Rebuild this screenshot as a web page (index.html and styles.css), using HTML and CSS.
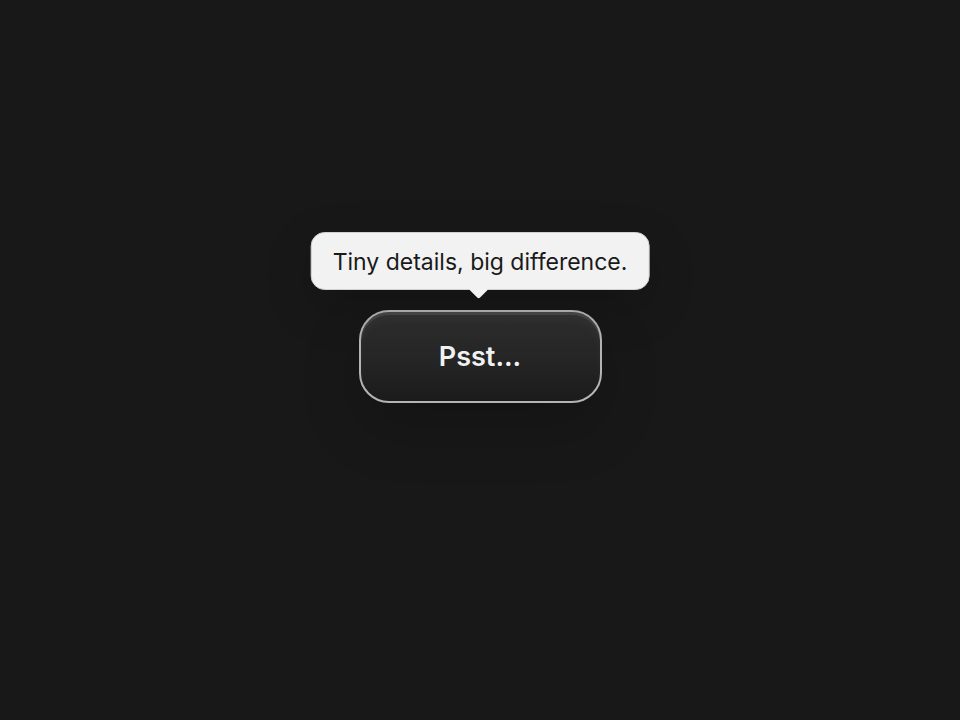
FILE: index.html
```html
<!DOCTYPE html>
<html lang="en">
<head>
    <meta charset="UTF-8">
    <meta name="viewport" content="width=device-width, initial-scale=1.0">
    <title>Psst</title>
    <link rel="stylesheet" href="styles.css">
</head>
<body>
    <main class="stage">
        <div class="tip-anchor">
            <div class="tooltip">Tiny details, big difference.</div>
            <button class="btn-psst">Psst...</button>
        </div>
    </main>
</body>
</html>
```

FILE: styles.css
```css
/* --- Theme --- */
:root {
    --bg: #181818;
    --tip-bg: #f2f2f2;
    --tip-border: #d0d0d0;
    --tip-text: #1a1a1a;
    --btn-top: #2f2f2f;
    --btn-bottom: #1b1b1b;
    --btn-border: #b4b4b4;
    --btn-text: #f2f2f2;
}

* {
    box-sizing: border-box;
    margin: 0;
    padding: 0;
}

body {
    font-family: Inter, "Noto Sans", sans-serif;
    background-color: var(--bg);
    min-height: 100vh;
}

.stage {
    display: flex;
    justify-content: center;
    padding-top: 310px;
}

.tip-anchor {
    position: relative;
}

/* --- Button --- */
.btn-psst {
    display: block;
    width: 243px;
    height: 93px;
    border-radius: 30px;
    border: 2px solid var(--btn-border);
    background: linear-gradient(180deg, var(--btn-top) 0%, #272727 45%, var(--btn-bottom) 100%);
    color: var(--btn-text);
    font-family: Inter, "Noto Sans", sans-serif;
    font-size: 27px;
    font-weight: 600;
    cursor: pointer;
    box-shadow:
        inset 0 3px 0 rgba(255, 255, 255, 0.1),
        inset 0 8px 10px rgba(255, 255, 255, 0.03),
        0 24px 60px rgba(0, 0, 0, 0.18);
}

/* --- Tooltip --- */
.tooltip {
    position: absolute;
    left: 50%;
    bottom: calc(100% + 20px);
    transform: translateX(-50%);
    white-space: nowrap;
    padding: 2px 21px 0;
    height: 58px;
    line-height: 54px;
    background: var(--tip-bg);
    border: 1px solid var(--tip-border);
    border-radius: 14px;
    color: var(--tip-text);
    font-size: 23px;
    font-weight: 400;
    box-shadow: 0 16px 50px rgba(0, 0, 0, 0.16);
}

.tooltip::after {
    content: "";
    position: absolute;
    left: 50%;
    top: 100%;
    width: 14px;
    height: 14px;
    margin-left: -8px;
    margin-top: -7px;
    background: var(--tip-bg);
    border-radius: 2px;
    transform: rotate(45deg);
}
```
